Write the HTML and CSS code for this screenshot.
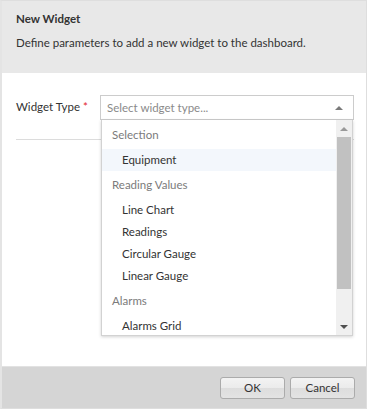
FILE: index.html
```html
<!DOCTYPE html>
<html lang="en">
<head>
    <meta charset="UTF-8">
    <title>New Widget</title>
    <link rel="stylesheet" href="styles.css">
</head>
<body>
    <div class="dialog">
        <div class="dialog-header">
            <div class="dialog-title">New Widget</div>
            <div class="dialog-subtitle">Define parameters to add a new widget to the dashboard.</div>
        </div>

        <div class="dialog-body">
            <div class="field">
                <label class="field-label">Widget Type <span class="req">*</span></label>
                <div class="select-wrap">
                    <div class="select-box">
                        <span class="placeholder">Select widget type...</span>
                        <span class="arrow-up"></span>
                    </div>

                    <!-- open dropdown list -->
                    <div class="dropdown">
                        <ul class="options">
                            <li class="group">Selection</li>
                            <li class="item hover">Equipment</li>
                            <li class="group">Reading Values</li>
                            <li class="item">Line Chart</li>
                            <li class="item">Readings</li>
                            <li class="item">Circular Gauge</li>
                            <li class="item">Linear Gauge</li>
                            <li class="group">Alarms</li>
                            <li class="item">Alarms Grid</li>
                        </ul>
                        <div class="scrollbar">
                            <div class="sb-btn"><span class="sb-up"></span></div>
                            <div class="sb-track">
                                <div class="sb-thumb"></div>
                            </div>
                            <div class="sb-btn"><span class="sb-down"></span></div>
                        </div>
                    </div>
                </div>
            </div>
            <div class="divider"></div>
        </div>

        <div class="dialog-footer">
            <button class="btn">OK</button>
            <button class="btn">Cancel</button>
        </div>
    </div>
</body>
</html>
```

FILE: styles.css
```css
body {
    margin: 0;
    font-family: Lato, 'Open Sans', sans-serif;
    font-size: 11.5px;
    color: #333;
    background: #fff;
}
.dialog {
    width: 367px;
    height: 409px;
    box-sizing: border-box;
    border: 1px solid #dedede;
    border-left: 2px solid #e4e4e4;
    display: flex;
    flex-direction: column;
}
.dialog-header {
    background: #e8e8e8;
    height: 72px;
    padding: 10px 14px 0;
    box-sizing: border-box;
}
.dialog-title {
    font-weight: bold;
    line-height: 16px;
}
.dialog-subtitle {
    margin-top: 8px;
    line-height: 16px;
}
.dialog-body {
    flex: 1;
    padding: 22px 12px 0 14px;
}
.field {
    display: flex;
    align-items: flex-start;
}
.field-label {
    width: 84px;
    line-height: 24px;
}
.req {
    color: #e3242b;
}
.select-wrap {
    position: relative;
    flex: 1;
}
.select-box {
    height: 25px;
    box-sizing: border-box;
    border: 1px solid #ccc;
    display: flex;
    align-items: center;
    justify-content: space-between;
    padding: 0 10px 0 6px;
}
.placeholder {
    color: #8a8a8a;
}
.arrow-up {
    width: 0;
    height: 0;
    border-left: 4px solid transparent;
    border-right: 4px solid transparent;
    border-bottom: 4px solid #7a7a7a;
}
.divider {
    margin-top: 19px;
    border-top: 1px solid #dcdcdc;
}
.dropdown {
    position: absolute;
    top: 25px;
    left: 1px;
    right: 1px;
    height: 216px;
    box-sizing: border-box;
    border: 1px solid #d2d2d2;
    border-top: none;
    background: #fff;
    box-shadow: 0 1px 3px rgba(0, 0, 0, 0.18);
    display: flex;
    overflow: hidden;
}
.options {
    list-style: none;
    margin: 0;
    padding: 1px 0 0;
    flex: 1;
}
.group {
    height: 28px;
    line-height: 28px;
    padding-left: 10px;
    color: #7b7b7b;
}
.item {
    height: 22px;
    line-height: 22px;
    padding-left: 20px;
}
.item.hover {
    background: #f3f7fc;
}
.scrollbar {
    width: 16px;
    background: #f0f0f0;
    display: flex;
    flex-direction: column;
}
.sb-btn {
    height: 17px;
    display: flex;
    align-items: center;
    justify-content: center;
}
.sb-up {
    border-left: 4px solid transparent;
    border-right: 4px solid transparent;
    border-bottom: 4px solid #999;
}
.sb-down {
    border-left: 4px solid transparent;
    border-right: 4px solid transparent;
    border-top: 4px solid #505050;
}
.sb-track {
    flex: 1;
}
.sb-thumb {
    height: 152px;
    margin: 0 1px;
    background: #c1c1c1;
}
.dialog-footer {
    height: 41px;
    background: #d5d5d5;
    border-top: 1px solid #e2e2e2;
    display: flex;
    justify-content: flex-end;
    align-items: center;
    gap: 5px;
    padding-right: 11px;
}
.btn {
    width: 65px;
    height: 22px;
    font-family: Lato, 'Open Sans', sans-serif;
    font-size: 11.5px;
    color: #333;
    border: 1px solid #ababab;
    border-radius: 3px;
    background: linear-gradient(to bottom, #f3f3f3, #ebebeb 50%, #dddddd 51%, #e3e3e3);
    padding: 0;
    cursor: pointer;
}
```
